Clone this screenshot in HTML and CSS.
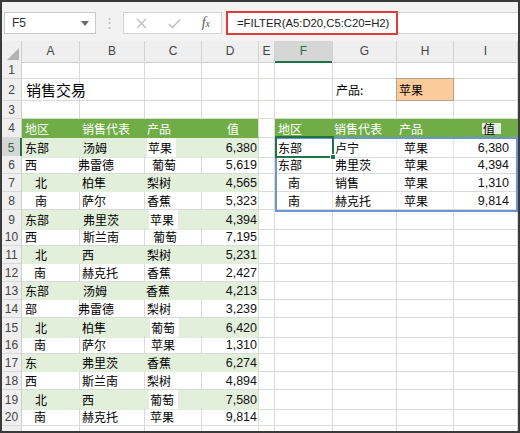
FILE: index.html
```html
<!DOCTYPE html>
<html lang="zh">
<head>
<meta charset="utf-8">
<link rel="stylesheet" href="styles.css">
</head>
<body>
<div class="frame">
  <div class="fbar">
    <div class="namebox"><span>F5</span><svg class="dd" width="8" height="5" viewBox="0 0 8 5"><path d="M0 0H8L4 5Z" fill="#6b6b6b"/></svg></div>
    <div class="dots">⋮</div>
    <div class="btns">
      <svg width="11" height="11" viewBox="0 0 11 11"><path d="M1 1L10 10M10 1L1 10" stroke="#bcbcbc" stroke-width="1.3" fill="none"/></svg>
      <svg width="13" height="11" viewBox="0 0 13 11"><path d="M1 6L4.5 9.5L12 1.5" stroke="#bcbcbc" stroke-width="1.3" fill="none"/></svg>
      <span class="fx">f<span class="fxx">x</span></span>
    </div>
    <div class="formula"><span class="redbox">=FILTER(A5:D20,C5:C20=H2)</span></div>
  </div>

  <div class="sheet">
    <div class="row hh">
      <div class="corner"><svg width="12" height="12" viewBox="0 0 12 12"><path d="M12 0V12H0Z" fill="#b4b4b4"/></svg></div>
      <div class="ch">A</div><div class="ch">B</div><div class="ch">C</div><div class="ch">D</div><div class="ch">E</div><div class="ch sel">F</div><div class="ch">G</div><div class="ch">H</div><div class="ch">I</div>
    </div>

    <div class="row h18"><div class="rh">1</div><div class="c"></div><div class="c"></div><div class="c"></div><div class="c dr"></div><div class="c"></div><div class="c"></div><div class="c"></div><div class="c"></div><div class="c"></div></div>

    <div class="row h22"><div class="rh">2</div><div class="c title">销售交易</div><div class="c"></div><div class="c"></div><div class="c dr"></div><div class="c"></div><div class="c"></div><div class="c">产品:</div><div class="c crit">苹果</div><div class="c"></div></div>

    <div class="row h18"><div class="rh">3</div><div class="c"></div><div class="c"></div><div class="c"></div><div class="c dr"></div><div class="c"></div><div class="c"></div><div class="c"></div><div class="c"></div><div class="c"></div></div>

    <div class="row h19"><div class="rh">4</div>
      <div class="c th">地区</div><div class="c th p2">销售代表</div><div class="c th p2">产品</div><div class="c th v1 dr">值</div>
      <div class="c"></div>
      <div class="c th">地区</div><div class="c th p1">销售代表</div><div class="c th p2">产品</div><div class="c th v2"><span class="vpatch">值</span></div>
    </div>

    <div class="row h18"><div class="rh rsel">5</div>
      <div class="c b">东部</div><div class="c b">汤姆</div><div class="c b p4"><span class="wp">苹果</span></div><div class="c b n dr">6,380</div>
      <div class="c"></div>
      <div class="c r">东部</div><div class="c r p2">卢宁</div><div class="c r p7">苹果</div><div class="c r n2">6,380</div>
    </div>
    <div class="row h18"><div class="rh">6</div>
      <div class="c">西</div><div class="c m2">弗雷德</div><div class="c p7">葡萄</div><div class="c n dr">5,619</div>
      <div class="c"></div>
      <div class="c r">东部</div><div class="c r p2">弗里茨</div><div class="c r p7">苹果</div><div class="c r n2">4,394</div>
    </div>
    <div class="row h18"><div class="rh">7</div>
      <div class="c b ind">北</div><div class="c b p2">柏隼</div><div class="c b p2">梨树</div><div class="c b n dr">4,565</div>
      <div class="c"></div>
      <div class="c r ind">南</div><div class="c r p2">销售</div><div class="c r p7">苹果</div><div class="c r n2">1,310</div>
    </div>
    <div class="row h18"><div class="rh">8</div>
      <div class="c ind">南</div><div class="c p2">萨尔</div><div class="c p2">香蕉</div><div class="c n dr">5,323</div>
      <div class="c"></div>
      <div class="c r ind">南</div><div class="c r p2">赫克托</div><div class="c r p7">苹果</div><div class="c r n2">9,814</div>
    </div>
    <div class="row h18"><div class="rh">9</div>
      <div class="c b">东部</div><div class="c b">弗里茨</div><div class="c b p6"><span class="wp">苹果</span></div><div class="c b n dr">4,394</div>
      <div class="c"></div><div class="c"></div><div class="c"></div><div class="c"></div><div class="c"></div>
    </div>
    <div class="row h18"><div class="rh">10</div>
      <div class="c">西</div><div class="c">斯兰南</div><div class="c p8">葡萄</div><div class="c n dr">7,195</div>
      <div class="c"></div><div class="c"></div><div class="c"></div><div class="c"></div><div class="c"></div>
    </div>
    <div class="row h18"><div class="rh">11</div>
      <div class="c b ind">北</div><div class="c b p2">西</div><div class="c b p2">梨树</div><div class="c b n dr">5,231</div>
      <div class="c"></div><div class="c"></div><div class="c"></div><div class="c"></div><div class="c"></div>
    </div>
    <div class="row h18"><div class="rh">12</div>
      <div class="c ind2">南</div><div class="c p2">赫克托</div><div class="c p2">香蕉</div><div class="c n dr">2,427</div>
      <div class="c"></div><div class="c"></div><div class="c"></div><div class="c"></div><div class="c"></div>
    </div>
    <div class="row h18"><div class="rh">13</div>
      <div class="c b">东部</div><div class="c b">汤姆</div><div class="c b p1">香蕉</div><div class="c b n dr">4,213</div>
      <div class="c"></div><div class="c"></div><div class="c"></div><div class="c"></div><div class="c"></div>
    </div>
    <div class="row h18"><div class="rh">14</div>
      <div class="c">部</div><div class="c m2">弗雷德</div><div class="c p2">梨树</div><div class="c n dr">3,239</div>
      <div class="c"></div><div class="c"></div><div class="c"></div><div class="c"></div><div class="c"></div>
    </div>
    <div class="row h18"><div class="rh">15</div>
      <div class="c b ind">北</div><div class="c b p2">柏隼</div><div class="c b p7"><span class="wp">葡萄</span></div><div class="c b n dr">6,420</div>
      <div class="c"></div><div class="c"></div><div class="c"></div><div class="c"></div><div class="c"></div>
    </div>
    <div class="row h18"><div class="rh">16</div>
      <div class="c ind2">南</div><div class="c p2">萨尔</div><div class="c p6">苹果</div><div class="c n dr">1,310</div>
      <div class="c"></div><div class="c"></div><div class="c"></div><div class="c"></div><div class="c"></div>
    </div>
    <div class="row h18"><div class="rh">17</div>
      <div class="c b">东</div><div class="c b p2">弗里茨</div><div class="c b p2">香蕉</div><div class="c b n dr">6,274</div>
      <div class="c"></div><div class="c"></div><div class="c"></div><div class="c"></div><div class="c"></div>
    </div>
    <div class="row h18"><div class="rh">18</div>
      <div class="c">西</div><div class="c p2">斯兰南</div><div class="c p2">梨树</div><div class="c n dr">4,894</div>
      <div class="c"></div><div class="c"></div><div class="c"></div><div class="c"></div><div class="c"></div>
    </div>
    <div class="row h18"><div class="rh">19</div>
      <div class="c b ind">北</div><div class="c b p2">西</div><div class="c b p6"><span class="wp">葡萄</span></div><div class="c b n dr">7,580</div>
      <div class="c"></div><div class="c"></div><div class="c"></div><div class="c"></div><div class="c"></div>
    </div>
    <div class="row h18"><div class="rh">20</div>
      <div class="c ind2">南</div><div class="c p2">赫克托</div><div class="c p5">苹果</div><div class="c n dr">9,814</div>
      <div class="c"></div><div class="c"></div><div class="c"></div><div class="c"></div><div class="c"></div>
    </div>
    <div class="row h18"><div class="rh"></div>
      <div class="c"></div><div class="c"></div><div class="c"></div><div class="c dr"></div><div class="c"></div><div class="c"></div><div class="c"></div><div class="c"></div><div class="c"></div>
    </div>

    <div class="spill"></div>
    <div class="cursor"><span class="handle"></span></div>
  </div>
</div>
</body>
</html>
```
FILE: styles.css
```css
* { box-sizing: border-box; }
html, body { margin: 0; padding: 0; }
body {
  width: 520px; height: 433px; overflow: hidden; background: #fff;
  font-family: "Liberation Sans", "Noto Sans CJK SC", sans-serif;
}
.frame {
  width: 520px; height: 433px; overflow: hidden;
  border: 2px solid #3a3a3a; background: #fff;
}

/* formula bar */
.fbar {
  height: 39px; background: #f2f2f2;
  display: flex; align-items: flex-start;
  padding: 10px 0 0 2px;
}
.namebox {
  width: 92px; height: 22px; background: #fff; border: 1px solid #c8c8c8;
  display: flex; align-items: center; justify-content: space-between;
  padding: 0 6px 0 7px; font-size: 12px; color: #333;
}
.dots { width: 27px; height: 22px; text-align: center; color: #b8b8b8; font-size: 13px; line-height: 22px; }
.btns {
  width: 99px; height: 22px; background: #fff; border: 1px solid #d4d4d4;
  display: flex; align-items: center; justify-content: space-between;
  padding: 0 11px 0 12px;
}
.fx { font-family: "Liberation Serif", serif; font-style: italic; font-size: 14px; color: #555; line-height: 1; }
.fxx { font-size: 10px; }
.formula {
  margin-left: 4px; flex: 1; height: 22px; background: #fff;
  border: 1px solid #d4d4d4; border-right: none;
}
.redbox {
  display: inline-block; height: 24px; margin: -2px 0 0 -1px;
  border: 2px solid #e03a3a; padding: 0 7px 0 9px;
  font-size: 11.3px; line-height: 20px; color: #222;
}

/* sheet */
.sheet { position: relative; }
.row {
  display: grid;
  grid-template-columns: 20px 58px 65px 57px 57px 16px 58px 64px 57px 64px;
}
.hh { height: 20px; }
.h18 { height: 18px; }
.h19 { height: 19px; }
.h22 { height: 22px; }

.corner {
  background: #efefef; border-right: 1px solid #cfcfcf; border-bottom: 1px solid #cfcfcf;
  display: flex; align-items: flex-end; justify-content: flex-end; padding: 0 2px 2px 0;
}
.ch {
  background: #efefef; border-right: 1px solid #d2d2d2; border-bottom: 1px solid #cfcfcf;
  text-align: center; font-size: 12px; line-height: 20px; color: #444;
}
.ch.sel { background: #d6d6d6; color: #2f6a47; border-bottom: 2px solid #217346; }

.rh {
  background: #efefef; border-right: 1px solid #cfcfcf; border-bottom: 1px solid #d8d8d8;
  display: flex; align-items: center; justify-content: center;
  font-size: 12px; color: #444;
}
.rh.rsel { background: #d6d6d6; color: #2f6a47; border-right: 2px solid #217346; }

.c {
  border-right: 1px solid #dadada; border-bottom: 1px solid #dadada;
  display: flex; align-items: center; padding-left: 3px;
  font-size: 12px; color: #000; white-space: nowrap; overflow: visible;
  font-family: "Noto Sans CJK SC", sans-serif;
}
.c.dr { border-right-color: #cfe6c0; }
.title { font-size: 15px; padding-left: 4px; }
.crit { background: #fccb9c; border: 1px solid #b9a08a; padding-left: 2px; margin: -1px 0 0 -1px; }

.th { background: #70ad47; color: #fff; border-right-color: #70ad47; border-bottom-color: #70ad47; }
.b { background: #e2efda; border-right-color: #e2efda; border-bottom-color: #e2efda; }
.b.dr { border-right-color: #cfe6c0; }
.r { border-right-color: #e4e4e4; }

.n, .n2 {
  justify-content: flex-end; padding-left: 0; padding-right: 1px;
  font-family: "Liberation Sans", sans-serif; font-size: 12.5px; color: #111;
}
.n2 { padding-right: 8px; }
.v1 { padding-left: 25px; }
.v2 { padding-left: 28px; }
.vpatch { background: #e6efdf; color: #000; line-height: 11px; padding: 0 6px 0 1px; }

.ind { padding-left: 13px; }
.ind2 { padding-left: 12px; }
.p1 { padding-left: 1px; }
.p2 { padding-left: 2px; }
.p4 { padding-left: 4px; }
.p5 { padding-left: 5px; }
.p6 { padding-left: 6px; }
.p7 { padding-left: 7px; }
.p8 { padding-left: 8px; }
.m2 { padding-left: 0; text-indent: -2px; }
.wp { background: #fff; padding: 1px 4px 1px 1px; margin-left: -2px; }

/* overlays: spill range and active cell */
.spill {
  position: absolute; left: 273px; top: 96px; width: 243px; height: 75px;
  border: 2px solid #6a94d2; pointer-events: none;
}
.cursor {
  position: absolute; left: 273px; top: 95px; width: 59px; height: 22px;
  border: 2px solid #217346;
}
.handle {
  position: absolute; right: -4px; bottom: -4px; width: 6px; height: 6px;
  background: #217346; border: 1px solid #fff;
}
```
